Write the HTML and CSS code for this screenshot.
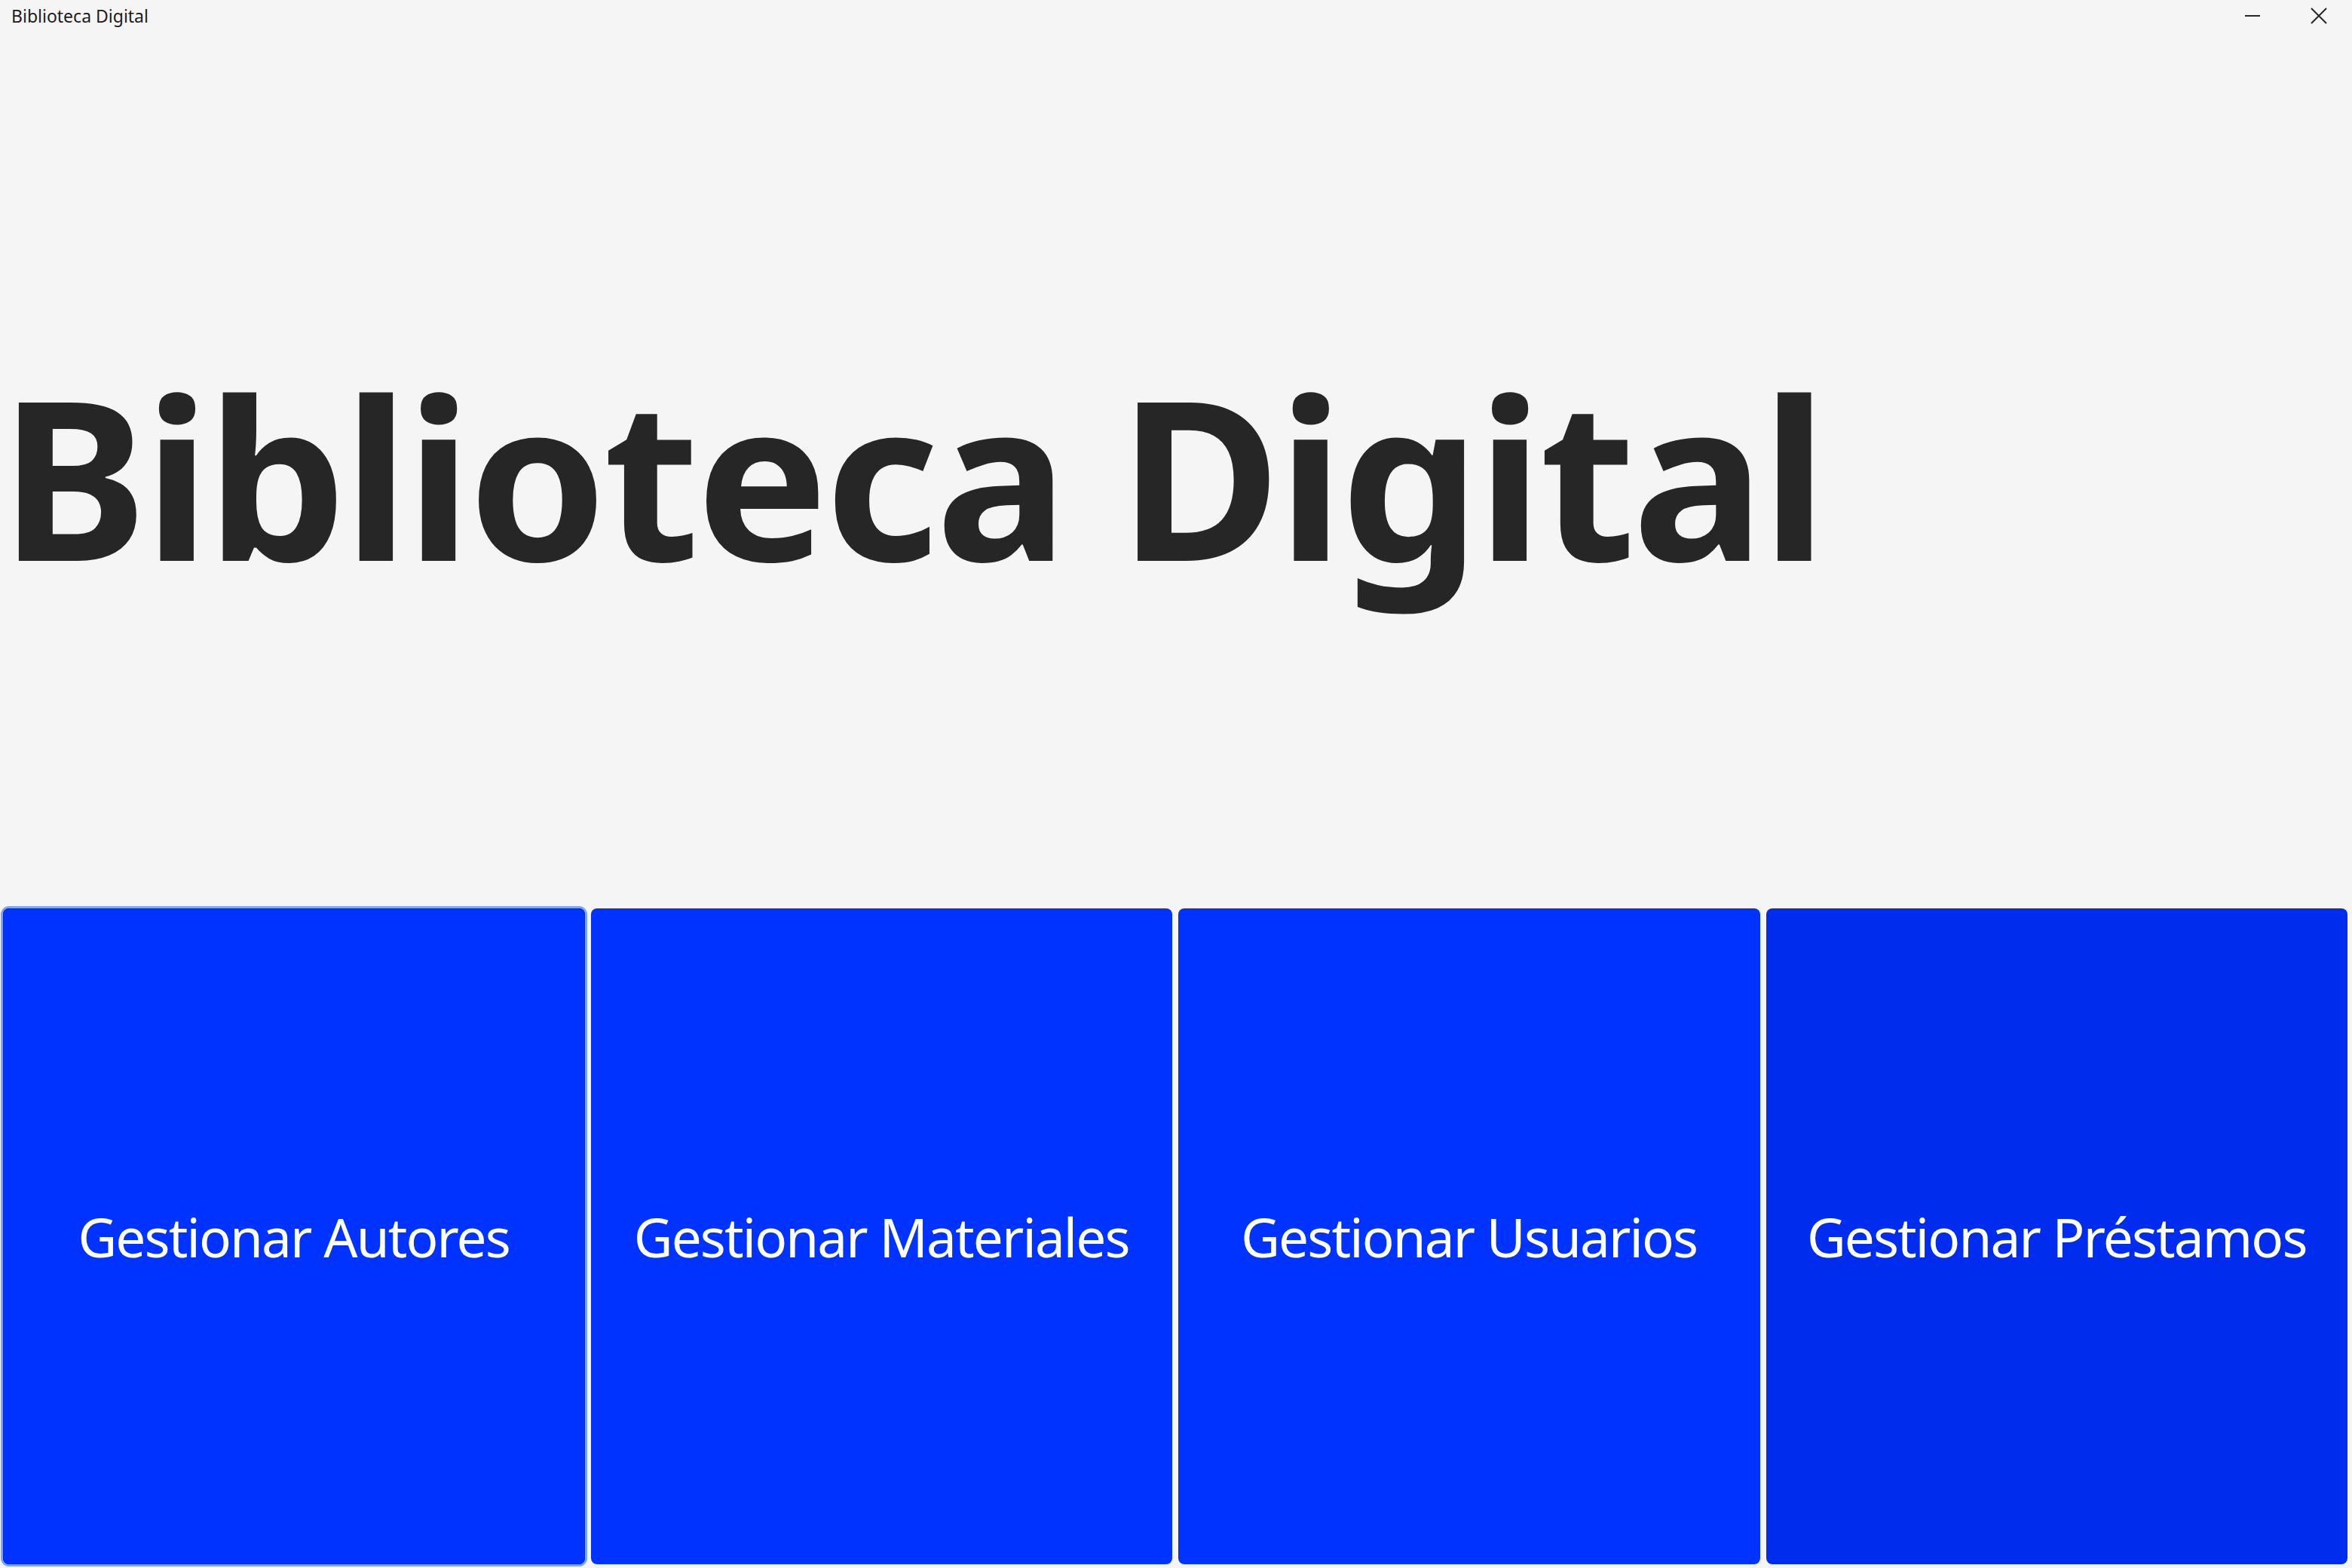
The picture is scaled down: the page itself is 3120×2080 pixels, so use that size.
FILE: index.html
```html
<!DOCTYPE html>
<html lang="es">
<head>
<meta charset="utf-8">
<title>Biblioteca Digital</title>
<link rel="stylesheet" href="styles.css">
</head>
<body>
<div class="window">
  <header class="titlebar">
    <span class="app-title">Biblioteca Digital</span>
    <div class="caption">
      <span class="cap-btn">
        <svg width="22" height="22" viewBox="0 0 22 22"><path d="M1 11h20" stroke="#262626" stroke-width="2"/></svg>
      </span>
      <span class="cap-btn">
        <svg width="22" height="22" viewBox="0 0 22 22"><path d="M1 1L21 21M21 1L1 21" stroke="#262626" stroke-width="2"/></svg>
      </span>
    </div>
  </header>
  <main class="content">
    <section class="hero">
      <h1 class="hero-title">Biblioteca Digital</h1>
    </section>
    <nav class="tiles">
      <button class="tile focused">Gestionar Autores</button>
      <button class="tile">Gestionar Materiales</button>
      <button class="tile">Gestionar Usuarios</button>
      <button class="tile dark">Gestionar Préstamos</button>
    </nav>
  </main>
</div>
</body>
</html>
```
FILE: styles.css
```css
html, body {
  margin: 0;
  padding: 0;
  background: #f5f5f5;
}
body {
  font-family: "Noto Sans", "Open Sans", sans-serif;
  color: #262626;
}
.window {
  width: 3120px;
  height: 2080px;
  display: flex;
  flex-direction: column;
}
.titlebar {
  height: 42px;
  display: flex;
  align-items: center;
  justify-content: space-between;
  flex: none;
}
.app-title {
  font-size: 23px;
  padding-left: 15px;
  line-height: 1;
  color: #1c1c1c;
}
.caption {
  display: flex;
  height: 42px;
}
.cap-btn {
  width: 88px;
  height: 42px;
  display: flex;
  align-items: center;
  justify-content: center;
}
.content {
  flex: 1;
  display: flex;
  flex-direction: column;
}
.hero {
  flex: 1;
  display: flex;
  align-items: center;
  padding-top: 12px;
}
.hero-title {
  margin: 0;
  font-size: 294px;
  font-weight: 700;
  line-height: 1;
  letter-spacing: -4.7px;
  color: #262626;
}
.tiles {
  height: 870px;
  flex: none;
  padding: 0 6px 5px 4px;
  display: grid;
  grid-template-columns: repeat(4, 1fr);
  gap: 8px;
}
.tile {
  border: none;
  border-radius: 8px;
  background: #0033ff;
  color: #ffffff;
  font-family: "Noto Sans", "Open Sans", sans-serif;
  font-size: 71px;
  font-weight: 400;
  letter-spacing: -1.85px;
  padding: 0;
  margin: 0;
}
.tile.dark {
  background: #002ded;
}
.tile.focused {
  box-shadow: inset 0 0 0 1px #0024d6, 0 0 0 3px #78a6ff;
}
```
